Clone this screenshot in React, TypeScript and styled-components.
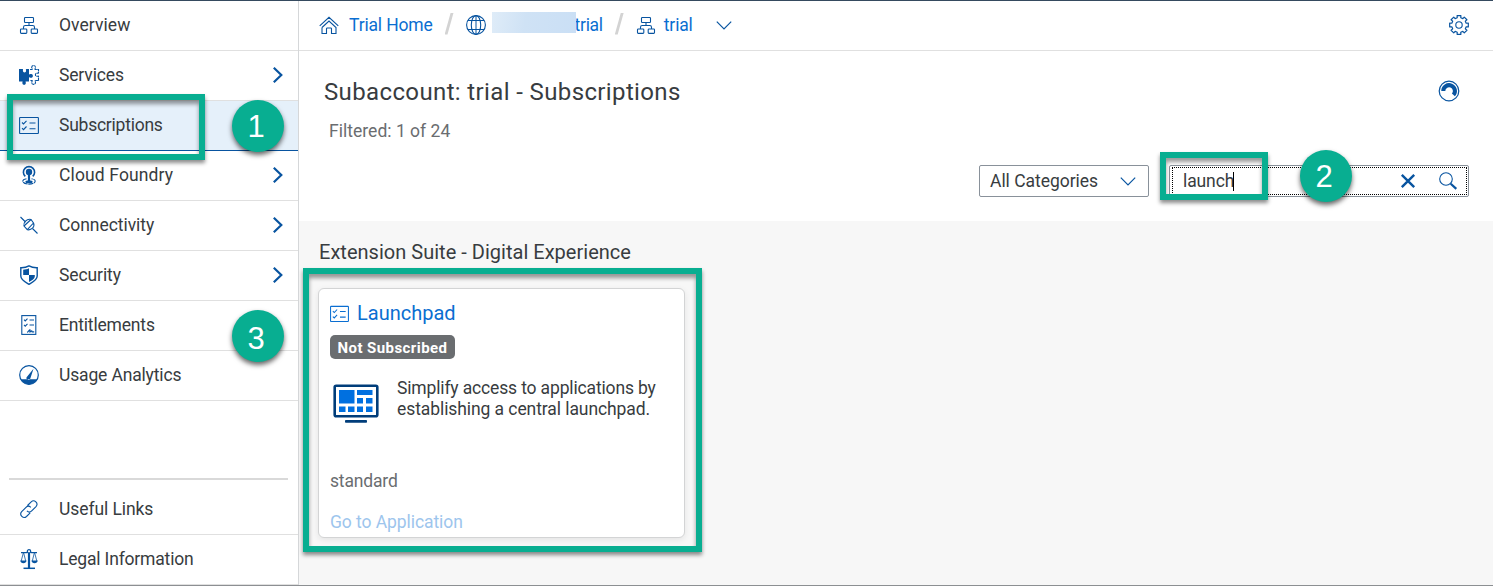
import React from "react";
import styled, { createGlobalStyle } from "styled-components";

const BLUE = "#0854a0";
const LINK = "#0a6ed1";
const TEXT = "#383c40";
const GREEN = "#08ae91";

const Global = createGlobalStyle`
  * { box-sizing: border-box; }
  body { margin: 0; background: #fff; }
  svg { display: block; flex: none; overflow: visible; }
`;

const Page = styled.div`
  position: relative;
  width: 1493px;
  height: 586px;
  display: flex;
  border-top: 1px solid #354a5f;
  border-bottom: 1px solid #8c8f92;
  overflow: hidden;
  font-family: Roboto, "Liberation Sans", sans-serif;
  font-size: 17.5px;
  color: ${TEXT};
  background: #fff;
`;

const Label = styled.span<{ $track?: number }>`
  white-space: pre;
  letter-spacing: ${(p) => p.$track ?? 0}px;
`;

/* Sidebar */
const Sidebar = styled.nav`
  flex: none;
  width: 299px;
  display: flex;
  flex-direction: column;
  border-right: 1px solid #d5d7d9;
  background: #fff;
`;
const NavGroup = styled.div`
  display: flex;
  flex-direction: column;
`;
const NavItem = styled.a<{ $active?: boolean }>`
  height: 50px;
  display: flex;
  align-items: center;
  padding: 0 15px 2px 19px;
  border-bottom: 1px solid ${(p) => (p.$active ? BLUE : "#e0e0e0")};
  background: ${(p) => (p.$active ? "#e5f0fa" : "transparent")};
`;
const NavText = styled(Label)`
  flex: 1;
  margin-left: 20px;
`;
const Divider = styled.div`
  height: 2px;
  margin: auto 10px 5px 9px;
  background: #d9d9d9;
`;

/* Main area */
const Main = styled.main`
  flex: 1;
  display: flex;
  flex-direction: column;
`;
const TopBar = styled.header`
  height: 50px;
  display: flex;
  align-items: center;
  padding: 0 24px 2px 20px;
  border-bottom: 1px solid #e0e0e0;
`;
const Crumbs = styled.div`
  flex: 1;
  display: flex;
  align-items: center;
`;
const Crumb = styled.a<{ $gap?: number }>`
  display: flex;
  align-items: center;
  gap: ${(p) => p.$gap ?? 10}px;
  color: ${LINK};
`;
const Redaction = styled.span`
  width: 84px;
  height: 21px;
  margin: -5px -1px 0 6px;
  z-index: 1;
  background: linear-gradient(100deg, #dfecf8 0%, #cfe2f5 40%, #cadff5 100%);
`;
const Slash = styled.span`
  width: 9px;
  height: 22px;
  margin: -2px 12px 0;
  clip-path: polygon(68% 0, 100% 0, 32% 100%, 0 100%);
  background: #d3d3d3;
  & + a { margin-left: 0; }
`;
const Chooser = styled.span`
  margin: 2px 0 0 23px;
`;
const Head = styled.section`
  height: 170px;
  display: flex;
  flex-direction: column;
  padding: 22px 24px 0 26px;
`;
const TitleRow = styled.div`
  height: 36px;
  display: flex;
  align-items: center;
  justify-content: space-between;
  padding-right: 9px;
`;
const Title = styled.h1`
  margin: 2px 0 0 -1px;
  font-size: 24px;
  font-weight: 400;
  letter-spacing: 0.37px;
  white-space: pre;
`;
const Count = styled.div`
  height: 20px;
  margin: 12px 0 0 4px;
  line-height: 20px;
  color: #6a6d70;
`;
const Filters = styled.div`
  display: flex;
  justify-content: flex-end;
  gap: 20px;
  margin-top: 24px;
`;
const Select = styled.div`
  width: 170px;
  height: 32px;
  display: flex;
  align-items: center;
  justify-content: space-between;
  padding: 0 12px 0 10px;
  border: 1px solid #89919a;
  border-radius: 2px;
`;
const Search = styled.div`
  width: 300px;
  height: 32px;
  padding: 1px;
  border: 1px solid #89919a;
  border-radius: 2px;
`;
const SearchFocus = styled.div`
  height: 28px;
  margin-left: 1px;
  display: flex;
  align-items: center;
  padding: 0 10px;
  border: 1px dotted #000;
`;
const Query = styled.span`
  flex: 1;
  display: flex;
  align-items: center;
`;
const Caret = styled.span`
  width: 1px;
  height: 19px;
  margin-left: -1px;
  background: #000;
`;
const SearchIcons = styled.span`
  display: flex;
  align-items: center;
  gap: 24px;
  margin-right: -1px;
`;

const Content = styled.section`
  flex: 1;
  padding: 19px 0 0 19px;
  background: #f7f7f7;
`;
const GroupTitle = styled.h2`
  margin: 0 0 0 1px;
  height: 24px;
  line-height: 24px;
  font-size: 20px;
  font-weight: 400;
`;
const Card = styled.article`
  width: 367px;
  height: 250px;
  margin-top: 24px;
  display: flex;
  flex-direction: column;
  align-items: flex-start;
  padding: 12px 12px 0 11px;
  border: 1px solid #d3d4d5;
  border-radius: 6px;
  background: #fff;
  box-shadow: 0 2px 6px rgba(0, 0, 0, 0.08);
`;
const CardTitle = styled.div`
  height: 24px;
  display: flex;
  align-items: center;
  gap: 8px;
  font-size: 20px;
  color: ${LINK};
`;
const Badge = styled.span`
  height: 24px;
  width: 125px;
  margin-top: 10px;
  border-radius: 5px;
  background: #6a6d70;
  color: #fff;
  font-size: 15px;
  font-weight: 700;
  line-height: 26px;
  text-align: center;
`;
const CardBody = styled.div`
  display: flex;
  align-items: flex-start;
  gap: 18px;
  height: 93px;
  margin: 19px 0 0 3px;
`;
const AppPicture = styled.div`
  padding-top: 6px;
`;
const Description = styled.div`
  display: flex;
  flex-direction: column;
  line-height: 21px;
`;
const Plan = styled.div`
  height: 20px;
  line-height: 20px;
  color: #6a6d70;
`;
const Action = styled.a`
  height: 20px;
  margin-top: 21px;
  line-height: 20px;
  color: #9dc5ed;
`;

/* Callouts drawn over the page */
const Frame = styled.div<{ $x: number; $y: number; $w: number; $h: number }>`
  position: absolute;
  left: ${(p) => p.$x}px;
  top: ${(p) => p.$y - 1}px;
  width: ${(p) => p.$w}px;
  height: ${(p) => p.$h}px;
  border: 6px solid ${GREEN};
  box-shadow: 0 3px 4px rgba(0, 0, 0, 0.45), inset 0 4px 4px rgba(0, 0, 0, 0.4);
`;
const Step = styled.div<{ $x: number; $y: number; $drop?: number }>`
  position: absolute;
  left: ${(p) => p.$x}px;
  top: ${(p) => p.$y - 1}px;
  width: 52px;
  height: 52px;
  padding: ${(p) => p.$drop ?? 0}px 4px 0 0;
  border-radius: 50%;
  background: ${GREEN};
  color: #fff;
  font: 31px/53px "Liberation Sans", sans-serif;
  text-align: center;
  box-shadow: 0 3px 5px rgba(0, 0, 0, 0.6);
`;

/* Icons */
type IconProps = { color?: string; size?: number };
const Icon = ({ children, size = 20, color = BLUE }: IconProps & { children: React.ReactNode }) => (
  <svg width={size} height={size} viewBox="0 0 20 20" fill="none" stroke={color} color={color} strokeWidth="1.1">
    {children}
  </svg>
);

const OrgIcon = () => (
  <Icon>
    <rect x="5.5" y="2.5" width="9" height="5" rx=".8" />
    <rect x="1.5" y="14" width="6.3" height="4.4" rx=".8" />
    <rect x="12.2" y="14" width="6.3" height="4.4" rx=".8" />
    <path d="M10 7.5v3M4.5 14v-1.8q0-1.7 1.7-1.7h7.6q1.7 0 1.7 1.7V14" />
  </Icon>
);
const PuzzleIcon = () => (
  <Icon>
    <path
      fill="currentColor"
      stroke="none"
      d="M0 4h3.5c1 0 .4 1 .4 1.8a1.6 1.6 0 0 0 3.2 0C7.1 5 6.4 4 7.5 4H10v5c0 .8.8.3 1.4.1a1.9 1.9 0 1 1 0 3.6c-.6-.2-1.4-.7-1.4.1V16.5H7.2c-1.2 0-.3.6-.3 1.6a1.8 1.8 0 1 1-3.6 0c0-1 .9-1.6-.3-1.6H0z"
    />
    <path
      d="M11 4.5h1.9c.8 0-.2-1.3-.2-2.100a1.900 1.900 0 1 1 3.800 0c0 .8-1 2.100-.2 2.100h3.200v3.400c0 .7-.7.200-1.500.2a1.600 1.600 0 1 0 0 3.200c.8 0 1.500-.5 1.500.2V15.500h-3.100c-.9 0 .1 1 .1 2a1.900 1.900 0 1 1-3.800 0c0-1 1.100-2 .2-2H11"
      strokeDasharray="3 .4"
    />
  </Icon>
);
const ChecklistIcon = ({ color, size }: IconProps) => (
  <Icon color={color} size={size}>
    <rect x=".6" y="2.5" width="18.8" height="16" rx=".6" />
    <path d="M3 7.5l1.5 1.5 3-3.2M3 13.2l1.5 1.5 3-3.2M10.5 8h6M10.5 13.8h6" />
  </Icon>
);
const FoundryIcon = () => (
  <Icon>
    <path d="M6.3 11.4A5.6 5.6 0 1 1 13.7 11.4" strokeWidth="1.6" />
    <circle cx="10" cy="7" r="3.2" fill="currentColor" stroke="none" />
    <path d="M10 8v8" strokeWidth="2.2" />
    <path d="M7.5 13.8c-2.2.4-3.7 1.2-3.7 2.3 0 1.8 2.8 3 6.2 3s6.2-1.2 6.2-3c0-1.1-1.5-1.9-3.7-2.3" strokeDasharray="5 .7" />
    <ellipse cx="10" cy="16.7" rx="3.6" ry="1.5" fill="currentColor" stroke="none" />
  </Icon>
);
const PlugIcon = () => (
  <Icon>
    <path d="M1.5 2l5 5M13.500 13.500l5 5M5 11l7-6.500M8.300 14.700l6.200-6.700" />
    <path d="M12 4.500C10 4 8 4.600 6.500 6.200 5 7.800 4.500 9.500 5 11l3.300 3.700c2 .4 3.700 0 5.200-1.500 1.500-1.600 1.800-3.500 1-5.200z" />
  </Icon>
);
const ShieldIcon = () => (
  <Icon>
    <path strokeWidth="1.4" d="M10 .9C7.5 2.3 4.8 2.8 1.8 2.7V11c0 4 4.5 6.2 8.2 8.300 3.700-2.100 8.200-4.300 8.200-8.300V2.700C15.200 2.800 12.500 2.300 10 .9z" />
    <path fill="currentColor" stroke="none" d="M10 3.200V10H4.200V4.700C6.300 4.600 8.300 4.200 10 3.200zM10 10h5.800v1.500c0 2-2.800 3.900-5.800 5.400z" />
  </Icon>
);
const EntitlementIcon = () => (
  <Icon>
    <rect x="2.8" y=".6" width="14" height="18.8" />
    <path d="M5 4.700l1.200 1.200L8.500 3.600M5 9.900l1.200 1.200L8.500 8.800M10.500 5h4.500M10.500 10h4.500M8 17.300c1.300-.2 2.200-2.800 3-2.500.6.400-.7 2.500 0 2.300.7-.3 1.300-1.600 1.700-1.300s0 1.300.8 1.100h1.700" />
  </Icon>
);
const GaugeIcon = () => (
  <Icon>
    <circle cx="10" cy="10" r="9.3" strokeWidth="1.2" />
    <path fill="currentColor" stroke="none" d="M2 14.300h16A9.300 9.300 0 0 1 10 19.500 9.300 9.300 0 0 1 2 14.300zM14.500 3.700L8 11.700a1.900 1.900 0 1 0 3.300 1.700z" />
  </Icon>
);
const LinkIcon = () => (
  <Icon>
    <path d="M8.500 6.500l3.700-3.700a3.400 3.400 0 0 1 4.800 4.800l-4.300 4.300a3.400 3.400 0 0 1-4.800 0M11.200 13.800l-3.700 3.700a3.400 3.400 0 0 1-4.800-4.800L7 8.400a3.400 3.400 0 0 1 4.800 0" />
  </Icon>
);
const ScalesIcon = () => (
  <Icon>
    <circle cx="10" cy="2.3" r="1.7" strokeWidth="1.2" />
    <path d="M10 4v15" strokeWidth="2.2" />
    <path d="M4.5 19.3h11.5" strokeWidth="1.5" />
    <path d="M2 3.7h5.5l1-.7M18 3.7h-5.5l-1-.7" strokeWidth="1.3" />
    <path d="M4.3 4L2.2 12M4.7 4l2 8M15.3 4l-2 8M15.7 4l2.1 8" strokeWidth=".8" />
    <path fill="currentColor" stroke="none" d="M1.300 11.500h6.200c0 3.600-6.200 3.600-6.200 0zM12.500 11.500h6.200c0 3.600-6.200 3.600-6.200 0z" />
  </Icon>
);
const HomeIcon = () => (
  <Icon>
    <path d="M.7 10.800L10 2.300l9.300 8.500M3 12.500l7-6.500 7 6.500v6h-4.500v-4.700q0-.8-.8-.8H8.300q-.8 0-.8.800v4.700H3v-6" />
  </Icon>
);
const GlobeIcon = () => (
  <Icon>
    <circle cx="10" cy="10" r="9.4" />
    <ellipse cx="10" cy="10" rx="4.7" ry="9.4" />
    <path d="M10 .6v18.8M2 5.5h16M2 14.5h16" strokeWidth="1" />
  </Icon>
);
const GearIcon = () => {
  const points: string[] = [];
  for (let i = 0; i < 8; i++) {
    [[-0.24, 7.4], [-0.2, 9.5], [0.2, 9.5], [0.24, 7.4]].forEach(([o, r]) => {
      const a = (i * Math.PI) / 4 + o;
      points.push(`${(10 + r * Math.sin(a)).toFixed(2)},${(10 - r * Math.cos(a)).toFixed(2)}`);
    });
  }
  return (
    <Icon>
      <polygon points={points.join(" ")} strokeLinejoin="round" strokeWidth="1.2" />
      <circle cx="10" cy="10" r="3.2" />
    </Icon>
  );
};
const BusyIcon = () => (
  <Icon size={22}>
    <circle cx="10" cy="10" r="8.9" />
    <path d="M4.8 10a5.3 5.3 0 1 1 9.2 3.6" strokeWidth="3.7" />
  </Icon>
);
const ChevronDown = () => (
  <svg width="16" height="9" viewBox="0 0 16 9" fill="none" stroke={BLUE} strokeWidth="1.2">
    <path d="M.8.7L8 7.900 15.200.7" />
  </svg>
);
const ChevronRight = () => (
  <svg width="10" height="16" viewBox="0 0 10 16" fill="none" stroke={BLUE} strokeWidth="2.2">
    <path d="M.8.8L8.300 8 .8 15.200" />
  </svg>
);
const CloseIcon = () => (
  <svg width="14" height="14" viewBox="0 0 14 14" fill="none" stroke={BLUE} strokeWidth="2.4">
    <path d="M.8.8l12.400 12.400M13.200.8L.8 13.200" />
  </svg>
);
const SearchIcon = () => (
  <svg width="18" height="18" viewBox="0 0 18 18" fill="none" stroke={BLUE}>
    <circle cx="7" cy="7" r="6.3" strokeWidth="1.1" />
    <path d="M11.700 11.700l5.600 5.200" strokeWidth="2.2" />
  </svg>
);
const Monitor = () => (
  <svg width="46" height="41" viewBox="0 0 46 41">
    <rect x="1.7" y="1.7" width="42.6" height="30.6" rx="1.5" fill="#fff" stroke="#003d7a" strokeWidth="2.6" />
    <g fill="#0070e0">
      <rect x="6" y="6" width="15.5" height="13.5" />
      <rect x="24" y="6" width="15.5" height="5" />
      <rect x="24" y="14" width="6" height="5.5" />
      <rect x="33" y="14" width="6.5" height="5.5" />
      <rect x="6" y="22.5" width="6.5" height="5.5" />
      <rect x="15" y="22.5" width="6.5" height="5.5" />
      <rect x="24" y="22.5" width="6" height="5.5" />
      <rect x="33" y="22.5" width="6.5" height="5.5" />
    </g>
    <rect x="12" y="36" width="22" height="2.8" rx=".8" fill="#003d7a" />
  </svg>
);

type Item = { label: string; track: number; icon: React.ReactNode; more?: boolean; active?: boolean };
const mainItems: Item[] = [
  { label: "Overview", track: 0.05, icon: <OrgIcon /> },
  { label: "Services", track: -0.15, icon: <PuzzleIcon />, more: true },
  { label: "Subscriptions", track: -0.24, icon: <ChecklistIcon />, active: true },
  { label: "Cloud Foundry", track: 0.13, icon: <FoundryIcon />, more: true },
  { label: "Connectivity", track: -0.06, icon: <PlugIcon />, more: true },
  { label: "Security", track: -0.1, icon: <ShieldIcon />, more: true },
  { label: "Entitlements", track: -0.18, icon: <EntitlementIcon /> },
  { label: "Usage Analytics", track: -0.16, icon: <GaugeIcon /> },
];
const footerItems: Item[] = [
  { label: "Useful Links", track: -0.08, icon: <LinkIcon /> },
  { label: "Legal Information", track: -0.18, icon: <ScalesIcon /> },
];

const Nav = ({ items }: { items: Item[] }) => (
  <NavGroup>
    {items.map((item) => (
      <NavItem key={item.label} $active={item.active}>
        {item.icon}
        <NavText $track={item.track}>{item.label}</NavText>
        {item.more && <ChevronRight />}
      </NavItem>
    ))}
  </NavGroup>
);

export default function App() {
  return (
    <Page>
      <Global />
      <Sidebar>
        <Nav items={mainItems} />
        <Divider />
        <Nav items={footerItems} />
      </Sidebar>
      <Main>
        <TopBar>
          <Crumbs>
            <Crumb>
              <HomeIcon />
              <Label $track={-0.16}>Trial Home</Label>
            </Crumb>
            <Slash />
            <Crumb $gap={0}>
              <GlobeIcon />
              <Redaction />
              <Label $track={-0.3}>trial</Label>
            </Crumb>
            <Slash />
            <Crumb $gap={8}>
              <OrgIcon />
              <Label $track={-0.15}>trial</Label>
            </Crumb>
            <Chooser>
              <ChevronDown />
            </Chooser>
          </Crumbs>
          <GearIcon />
        </TopBar>
        <Head>
          <TitleRow>
            <Title>Subaccount: trial - Subscriptions</Title>
            <BusyIcon />
          </TitleRow>
          <Count>
            <Label $track={0.02}>Filtered: 1 of 24</Label>
          </Count>
          <Filters>
            <Select>
              <Label $track={-0.03}>All Categories</Label>
              <ChevronDown />
            </Select>
            <Search>
              <SearchFocus>
                <Query>
                  <Label $track={-0.1}>launch</Label>
                  <Caret />
                </Query>
                <SearchIcons>
                  <CloseIcon />
                  <SearchIcon />
                </SearchIcons>
              </SearchFocus>
            </Search>
          </Filters>
        </Head>
        <Content>
          <GroupTitle>
            <Label $track={0.02}>Extension Suite - Digital Experience</Label>
          </GroupTitle>
          <Card>
            <CardTitle>
              <ChecklistIcon color={LINK} size={19} />
              <Label>Launchpad</Label>
            </CardTitle>
            <Badge>
              <Label $track={0.43}>Not Subscribed</Label>
            </Badge>
            <CardBody>
              <AppPicture>
                <Monitor />
              </AppPicture>
              <Description>
                <Label $track={-0.15}>Simplify access to applications by</Label>
                <Label $track={-0.08}>establishing a central launchpad.</Label>
              </Description>
            </CardBody>
            <Plan>
              <Label $track={-0.17}>standard</Label>
            </Plan>
            <Action>
              <Label $track={-0.07}>Go to Application</Label>
            </Action>
          </Card>
        </Content>
      </Main>
      <Frame $x={7} $y={94} $w={198} $h={66} />
      <Frame $x={1160} $y={152} $w={108} $h={48} />
      <Frame $x={303} $y={268} $w={399} $h={284} />
      <Step $x={232} $y={100}>1</Step>
      <Step $x={1300} $y={150}>2</Step>
      <Step $x={232} $y={310} $drop={2}>3</Step>
    </Page>
  );
}
